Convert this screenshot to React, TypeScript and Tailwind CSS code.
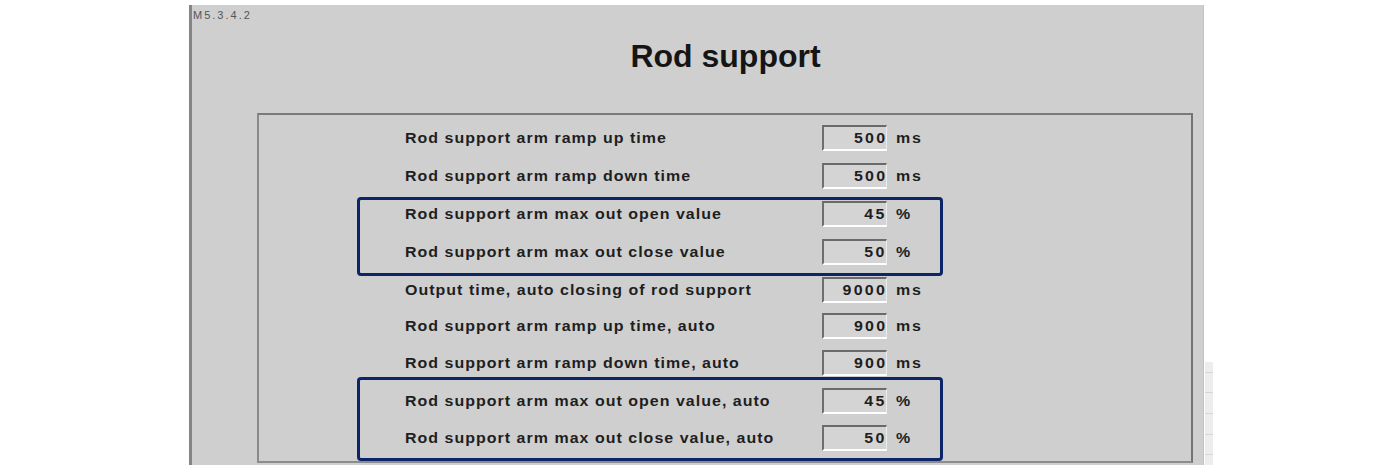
import React from "react";

type Row = { label: string; value: string; unit: string };

const top: Row[] = [
  { label: "Rod support arm ramp up time", value: "500", unit: "ms" },
  { label: "Rod support arm ramp down time", value: "500", unit: "ms" },
];
const box1: Row[] = [
  { label: "Rod support arm max out open value", value: "45", unit: "%" },
  { label: "Rod support arm max out close value", value: "50", unit: "%" },
];
const middle: Row[] = [
  { label: "Output time, auto closing of rod support", value: "9000", unit: "ms" },
  { label: "Rod support arm ramp up time, auto", value: "900", unit: "ms" },
  { label: "Rod support arm ramp down time, auto", value: "900", unit: "ms" },
];
const box2: Row[] = [
  { label: "Rod support arm max out open value, auto", value: "45", unit: "%" },
  { label: "Rod support arm max out close value, auto", value: "50", unit: "%" },
];

// the old HMI screenshot is stretched a bit horizontally, hence the scale-x
function ParamRow({ row, className = "" }: { row: Row; className?: string }) {
  return (
    <div className={"flex items-center h-[26px] " + className}>
      <div className="w-[417px] whitespace-nowrap">
        <span className="inline-block origin-left scale-x-[1.14] text-[14px] font-bold tracking-[0.9px] text-[#1e1e1e] leading-[26px]">
          {row.label}
        </span>
      </div>
      <div className="w-[65px] h-[26px] bg-[#d4d4d4] border-t-2 border-l-2 border-b-2 border-r border-t-[#6a6a6a] border-l-[#6e6e6e] border-b-white border-r-[#ececec] flex items-center justify-end pr-[1px]">
        <span className="inline-block origin-right scale-x-[1.14] text-[14px] font-bold tracking-[2px] -mr-[2px] text-[#1e1e1e]">
          {row.value}
        </span>
      </div>
      <div className="ml-[9px]">
        <span className="inline-block origin-left scale-x-[1.14] text-[14px] font-bold tracking-[1.5px] text-[#1e1e1e]">
          {row.unit}
        </span>
      </div>
    </div>
  );
}

export default function App() {
  return (
    <div
      className="w-[1400px] h-[470px] bg-white overflow-hidden relative"
      style={{ fontFamily: '"Liberation Sans", Arial, sans-serif' }}
    >
      <div className="ml-[189px] mt-[5px] w-[1015px] h-[460px] bg-[#cfcfcf] border-l-[3px] border-l-[#858585] border-r border-r-[#c2c2c2] flex flex-col">
        <div className="mt-[4px] ml-[1px] h-[13px] leading-[13px] text-[11px] tracking-[2px] text-[#555]">M5.3.4.2</div>
        <div className="mt-[16px] h-[36px] leading-[36px] text-[32px] font-bold text-[#151515] text-center pl-[66px] pr-[10px]">
          Rod support
        </div>
        <div className="mt-[39px] ml-[65px] mr-[10px] h-[350px] border-2 border-t-[#7a7a7a] border-l-[#8a8a8a] border-r-[#747474] border-b-[#8c8c8c] flex flex-col pt-[10px] pl-[98px]">
          <div className="w-[586px] border-x-[3px] border-transparent pl-[45px]">
            <ParamRow row={top[0]} />
            <ParamRow row={top[1]} className="mt-[12px]" />
          </div>
          <div className="mt-[8px] w-[586px] border-[3px] border-[#0c2468] rounded-[4px] pl-[45px] pt-[1px] pb-[8px]">
            <ParamRow row={box1[0]} />
            <ParamRow row={box1[1]} className="mt-[12px]" />
          </div>
          <div className="mt-[1px] w-[586px] border-x-[3px] border-transparent pl-[45px]">
            <ParamRow row={middle[0]} />
            <ParamRow row={middle[1]} className="mt-[10px]" />
            <ParamRow row={middle[2]} className="mt-[11px]" />
          </div>
          <div className="mt-[1px] w-[586px] border-[3px] border-[#0c2468] rounded-[4px] pl-[45px] pt-[8px] pb-[7px]">
            <ParamRow row={box2[0]} />
            <ParamRow row={box2[1]} className="mt-[11px]" />
          </div>
        </div>
      </div>
      <div className="absolute left-[1205px] top-[362px] w-[8px] h-[103px] bg-[#ededed] flex flex-col justify-around">
        <div className="h-px bg-[#d6d6d6]" />
        <div className="h-px bg-[#d6d6d6]" />
        <div className="h-px bg-[#d6d6d6]" />
        <div className="h-px bg-[#d6d6d6]" />
        <div className="h-px bg-[#d6d6d6]" />
      </div>
    </div>
  );
}
